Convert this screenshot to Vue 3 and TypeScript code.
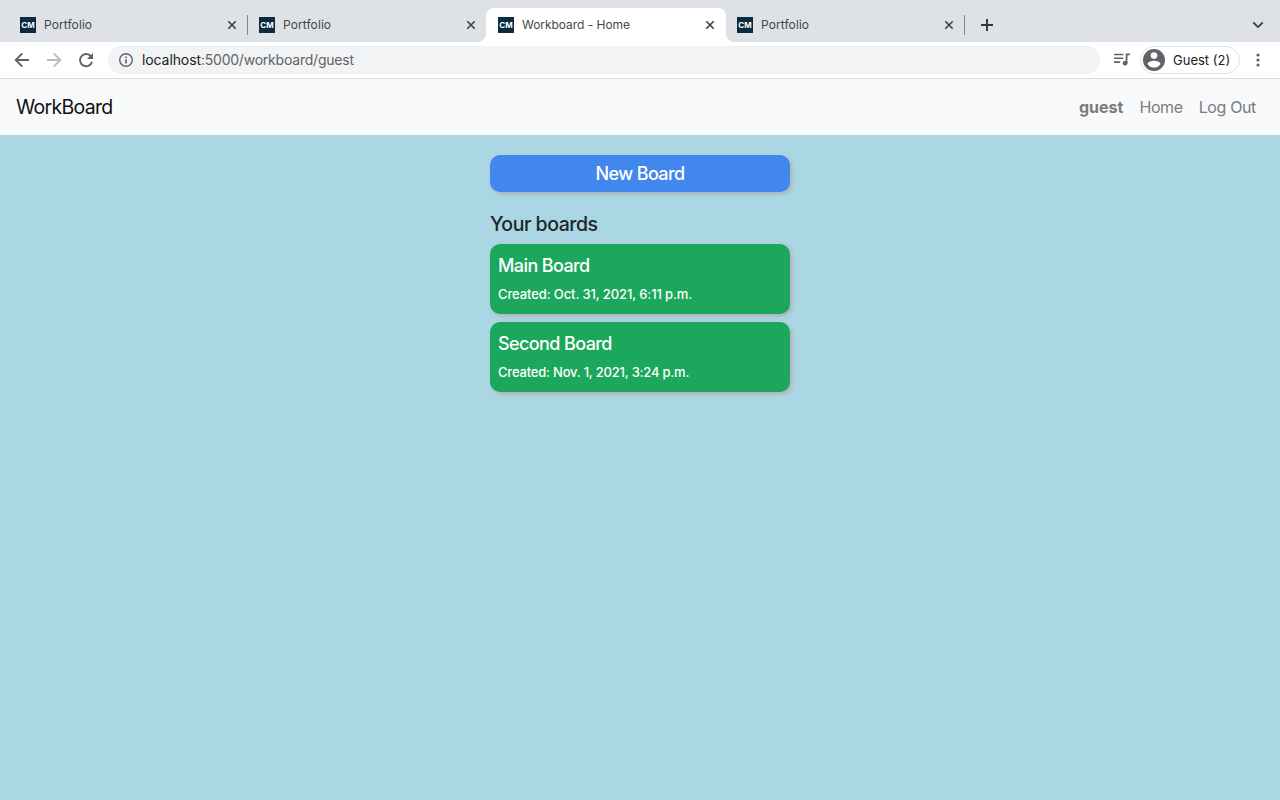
<script setup lang="ts">
interface Tab {
  title: string
  active: boolean
  separator: boolean
}

interface Board {
  name: string
  created: string
  kind: string
}

const tabs: Tab[] = [
  { title: 'Portfolio', active: false, separator: true },
  { title: 'Portfolio', active: false, separator: false },
  { title: 'Workboard - Home', active: true, separator: false },
  { title: 'Portfolio', active: false, separator: true },
]

const boards: Board[] = [
  { name: 'Main Board', created: 'Oct. 31, 2021, 6:11 p.m.', kind: 'first' },
  { name: 'Second Board', created: 'Nov. 1, 2021, 3:24 p.m.', kind: 'second' },
]
</script>

<template>
  <div class="window">
    <header class="tab-strip">
      <div v-for="(tab, i) in tabs" :key="i" class="tab" :class="{ active: tab.active, separator: tab.separator }">
        <span class="favicon">CM</span>
        <span class="tab-title">{{ tab.title }}</span>
        <svg class="close" width="10" height="10" viewBox="0 0 10 10">
          <path d="M1.3 1.3 8.7 8.7M8.7 1.3 1.3 8.7" fill="none" stroke="#3c4043" stroke-width="1.6" />
        </svg>
      </div>
      <svg class="plus" width="12" height="12" viewBox="0 0 12 12">
        <path d="M6 0V12M0 6H12" fill="none" stroke="#35373a" stroke-width="1.9" />
      </svg>
      <svg class="chevron" width="12" height="8" viewBox="0 0 12 8">
        <path d="M1.3 1.5 6 6.1 10.7 1.5" fill="none" stroke="#3c4043" stroke-width="1.8" />
      </svg>
    </header>

    <div class="toolbar">
      <svg class="tool back" width="16" height="16" viewBox="0 0 16 16">
        <path d="M15 8H2M8.3 1.4 1.7 8 8.3 14.6" fill="none" stroke="#5f6368" stroke-width="1.9" />
      </svg>
      <svg class="tool forward" width="16" height="16" viewBox="0 0 16 16">
        <path d="M1 8H14M7.7 1.4 14.3 8 7.7 14.6" fill="none" stroke="#babcbe" stroke-width="1.9" />
      </svg>
      <svg class="tool reload" width="16" height="16" viewBox="0 0 16 16">
        <path d="M14 9.7A6.1 6.1 0 1 1 12.3 3.7L13.7 5.1" fill="none" stroke="#5f6368" stroke-width="1.9" />
        <path d="M15 1V7H9Z" fill="#5f6368" />
      </svg>
      <div class="address">
        <svg class="info" width="16" height="16" viewBox="0 0 16 16">
          <circle cx="8" cy="8" r="6.3" fill="none" stroke="#5f6368" stroke-width="1.4" />
          <path d="M8 7.2V11.5M8 4.4V6" stroke="#5f6368" stroke-width="1.6" />
        </svg>
        <span class="url"><b>localhost</b>:5000/workboard/guest</span>
      </div>
      <svg class="media" width="17" height="14" viewBox="0 0 17 14">
        <path d="M0 1.5H9.4M0 5.3H9.4M0 9.1H6.2" stroke="#5f6368" stroke-width="1.6" />
        <path d="M12.6 10.1V1.4H16" fill="none" stroke="#5f6368" stroke-width="1.7" />
        <circle cx="11.1" cy="10.2" r="2.4" fill="#5f6368" />
      </svg>
      <div class="profile">
        <svg width="22" height="22" viewBox="0 0 22 22">
          <circle cx="11" cy="11" r="11" fill="#5f6368" />
          <circle cx="11" cy="6.6" r="3.3" fill="#fff" />
          <path d="M4.5 15.1C4.8 12.9 8.7 11.8 11 11.8S17.2 12.9 17.5 15.1A7.8 7.8 0 0 1 4.5 15.1Z" fill="#fff" />
        </svg>
        <span class="profile-name">Guest (2)</span>
      </div>
      <svg class="menu" width="4" height="14" viewBox="0 0 4 14">
        <g fill="#5f6368">
          <circle cx="2" cy="2" r="1.6" />
          <circle cx="2" cy="7" r="1.6" />
          <circle cx="2" cy="12" r="1.6" />
        </g>
      </svg>
    </div>

    <nav class="navbar">
      <span class="brand">WorkBoard</span>
      <div class="links">
        <b class="user">guest</b>
        <span class="home">Home</span>
        <span class="logout">Log Out</span>
      </div>
    </nav>

    <main class="content">
      <div class="column">
        <button class="new-board">New Board</button>
        <h5 class="heading">Your boards</h5>
        <article v-for="board in boards" :key="board.name" class="board">
          <h6 class="board-name">{{ board.name }}</h6>
          <p class="created" :class="board.kind">Created: {{ board.created }}</p>
        </article>
      </div>
    </main>
  </div>
</template>

<style>
body {
  margin: 0;
  overflow: hidden;
}
</style>

<style scoped>
.window {
  width: 1280px;
  height: 800px;
  display: flex;
  flex-direction: column;
  font-family: Inter, "Liberation Sans", sans-serif;
  background: #aad7e3;
  white-space: nowrap;
}
.tab-strip {
  height: 34px;
  padding: 8px 16px 0 8px;
  display: flex;
  align-items: center;
  background: #dee1e6;
}
.tab {
  position: relative;
  width: 239px;
  height: 34px;
  padding: 0 10px 0 12px;
  box-sizing: border-box;
  display: flex;
  align-items: center;
}
.tab.active {
  background: #fff;
  width: 240px;
  margin-right: -1px;
  border-radius: 8px 8px 0 0;
}
.tab.active::before,
.tab.active::after {
  content: "";
  position: absolute;
  bottom: 0;
  width: 8px;
  height: 8px;
}
.tab.active::before {
  left: -8px;
  background: radial-gradient(circle at 0 0, transparent 7.5px, #fff 8.2px);
}
.tab.active::after {
  right: -8px;
  background: radial-gradient(circle at 100% 0, transparent 7.5px, #fff 8.2px);
}
.tab.separator::after {
  content: "";
  position: absolute;
  right: -1px;
  top: 7px;
  width: 1px;
  height: 20px;
  background: #85888d;
}
.favicon {
  width: 16px;
  height: 16px;
  background: #0c2a40;
  color: #fff;
  font-size: 8px;
  font-weight: 700;
  line-height: 16px;
  text-align: center;
}
.tab-title {
  margin-left: 8px;
  padding-bottom: 2px;
  font-size: 12px;
  letter-spacing: 0.08px;
  color: #45474a;
}
.active .tab-title {
  letter-spacing: -0.04px;
}
.close {
  margin-left: auto;
}
.tab.active .close {
  margin-right: 1px;
}
.plus {
  margin-left: 17px;
}
.chevron {
  margin-left: auto;
}
.toolbar {
  height: 36px;
  display: flex;
  align-items: center;
  background: #fff;
  border-bottom: 1px solid #d9dbde;
}
.back {
  margin-left: 14px;
}
.forward,
.reload {
  margin-left: 16px;
}
.address {
  width: 992px;
  height: 28px;
  margin-left: 14px;
  padding-left: 10px;
  box-sizing: border-box;
  display: flex;
  align-items: center;
  border-radius: 14px;
  background: #f1f3f4;
}
.url {
  margin-left: 8px;
  padding-bottom: 2px;
  font-size: 14px;
  letter-spacing: -0.22px;
  color: #606367;
}
.url b {
  font-weight: 400;
  letter-spacing: -0.1px;
  color: #202124;
}
.media {
  margin-left: 14px;
}
.profile {
  width: 100px;
  height: 28px;
  margin-left: 9px;
  padding-left: 2px;
  box-sizing: border-box;
  display: flex;
  align-items: center;
  border: 1px solid #dfe1e4;
  border-radius: 14px;
}
.profile-name {
  margin-left: 8px;
  font-size: 13px;
  color: #202124;
}
.menu {
  margin-left: 16px;
}
.navbar {
  height: 56px;
  padding: 0 24px 0 16px;
  display: flex;
  align-items: center;
  justify-content: space-between;
  background: #f8f9fb;
}
.brand {
  font-size: 19.5px;
  letter-spacing: -0.7px;
  color: #111;
}
.links {
  display: flex;
  gap: 16px;
  font-size: 16px;
  color: #7b7c7d;
}
.user {
  font-weight: 700;
}
.home {
  letter-spacing: -0.4px;
}
.logout {
  letter-spacing: -0.36px;
}
.content {
  flex: 1;
  display: flex;
  justify-content: center;
}
.column {
  width: 300px;
  padding-top: 20px;
}
.new-board,
.board {
  border-radius: 10px;
  box-shadow: 2px 2px 4px #b0b0b0;
  color: #fff;
}
.new-board {
  width: 300px;
  height: 37px;
  display: block;
  padding: 0;
  border: 0;
  background: #4287ee;
  font: 500 18px/37px Inter, "Liberation Sans", sans-serif;
  letter-spacing: -0.6px;
}
.heading {
  margin: 20px 0 8px;
  font-size: 19.5px;
  font-weight: 500;
  line-height: 24px;
  letter-spacing: -0.5px;
  color: #212529;
}
.board {
  height: 70px;
  margin-bottom: 8px;
  padding: 11px 8px 0;
  box-sizing: border-box;
  background: #1ca85c;
}
.board-name {
  margin: 0;
  font-size: 18px;
  font-weight: 500;
  line-height: 22px;
  letter-spacing: -0.6px;
}
.created {
  margin: 7px 0 0;
  font-size: 13px;
  font-weight: 500;
  line-height: 20px;
}
.created.first {
  letter-spacing: -0.11px;
}
.created.second {
  letter-spacing: -0.2px;
}
</style>
